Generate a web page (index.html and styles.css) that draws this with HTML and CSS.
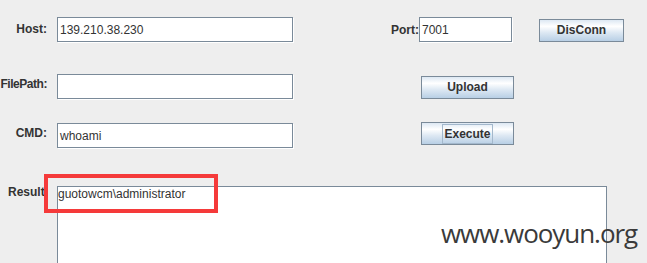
FILE: index.html
```html
<!DOCTYPE html>
<html>
<head>
<meta charset="utf-8">
<link rel="stylesheet" href="styles.css">
</head>
<body>
<div class="panel">
  <div class="row r1">
    <div class="lbl lbl-host">Host:</div>
    <div class="field f-wide">139.210.38.230</div>
    <div class="lbl lbl-port">Port:</div>
    <div class="field f-port">7001</div>
    <div class="btn b-disc">DisConn</div>
  </div>
  <div class="row r2">
    <div class="lbl lbl-path">FilePath:</div>
    <div class="field f-wide"></div>
    <div class="btn b-right">Upload</div>
  </div>
  <div class="row r3">
    <div class="lbl lbl-cmd">CMD:</div>
    <div class="field f-wide">whoami</div>
    <div class="btn b-right b-exec"><span class="focus">Execute</span></div>
  </div>
  <div class="row r4">
    <div class="lbl-result">Result</div>
    <div class="area">guotowcm\administrator</div>
    <div class="highlight"></div>
  </div>
</div>
<div class="watermark">www.wooyun.org</div>
</body>
</html>
```
FILE: styles.css
```css
html, body {
  margin: 0;
  padding: 0;
  background: #eeeeee;
  width: 647px;
  height: 263px;
  overflow: hidden;
}
body {
  font-family: "Liberation Sans", Arial, sans-serif;
  font-size: 12px;
  line-height: 15px;
  color: #333333;
  position: relative;
}
.panel {
  padding-top: 17px;
  display: flex;
  flex-direction: column;
}
.row {
  display: flex;
  align-items: center;
  height: 26px;
}
.r2 { margin-top: 31px; }
.r3 { margin-top: 23px; }
.r4 {
  margin-top: 25px;
  height: auto;
  align-items: flex-start;
  position: relative;
}
.lbl {
  width: 47px;
  margin-right: 10px;
  display: flex;
  justify-content: flex-end;
  white-space: nowrap;
  font-weight: bold;
  flex-shrink: 0;
}
.lbl-host { margin-bottom: 2px; }
.lbl-path {
  margin-bottom: 6px;
  letter-spacing: -0.45px;
}
.lbl-cmd { margin-bottom: 5px; }
.lbl-port {
  width: 28px;
  margin-left: 98px;
  margin-right: 0;
  margin-bottom: 0;
}
.field {
  box-sizing: border-box;
  height: 25px;
  align-self: flex-start;
  border: 1px solid #7a8a99;
  box-shadow: 1px 1px 0 #ffffff;
  background: #ffffff;
  color: #333333;
  padding: 5px 2px 0;
  white-space: nowrap;
  flex-shrink: 0;
}
.f-wide { width: 236px; }
.f-port { width: 93px; padding-left: 2px; }
.btn {
  box-sizing: border-box;
  height: 23px;
  border: 1px solid #7a8a99;
  background: linear-gradient(to bottom, #dde8f3 0%, #ffffff 30%, #dde8f3 60%, #b8cfe5 100%);
  font-weight: bold;
  color: #333333;
  display: flex;
  align-items: center;
  justify-content: center;
  flex-shrink: 0;
}
.b-disc {
  width: 85px;
  margin-left: 27px;
}
.b-right {
  width: 93px;
  margin-left: 128px;
}
.b-exec {
  align-self: flex-start;
  margin-top: -1px;
}
.focus {
  border: 1px solid #a3b8cc;
  padding: 2px 1px;
  line-height: 14px;
}
.lbl-result {
  width: 47px;
  margin-right: 10px;
  padding-left: 8px;
  box-sizing: border-box;
  margin-top: 11px;
  font-weight: bold;
  white-space: nowrap;
  flex-shrink: 0;
}
.area {
  box-sizing: border-box;
  margin-top: 12px;
  width: 550px;
  height: 100px;
  border: 1px solid #7a8a99;
  background: #ffffff;
  color: #333333;
  padding: 0;
  white-space: nowrap;
}
.highlight {
  position: absolute;
  left: 44px;
  top: 0;
  width: 174px;
  height: 39px;
  box-sizing: border-box;
  border: 4px solid #f53a3a;
}
.watermark {
  position: absolute;
  left: 441px;
  top: 218px;
  font-family: "Open Sans", sans-serif;
  font-size: 26px;
  line-height: 30px;
  letter-spacing: -1.05px;
  color: #3a3a3a;
  white-space: nowrap;
}
```
